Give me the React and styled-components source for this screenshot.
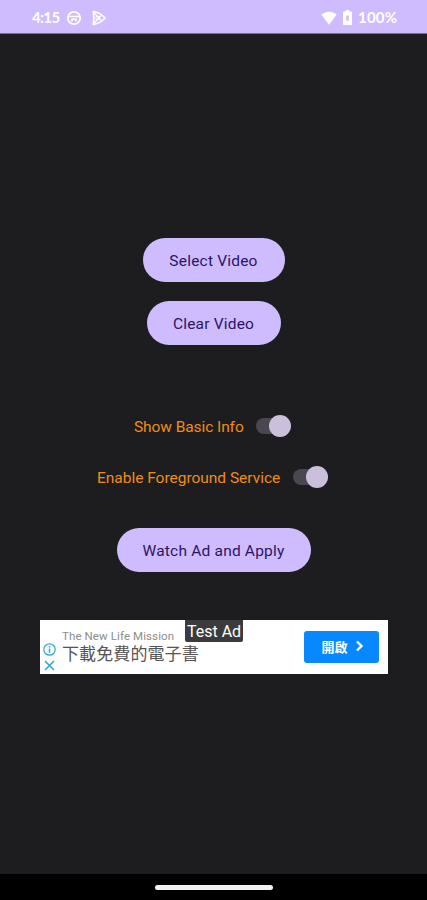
import styled, { createGlobalStyle } from "styled-components";

const GlobalStyle = createGlobalStyle`
  * {
    box-sizing: border-box;
  }
  body {
    margin: 0;
    background: #1d1d1f;
    font-family: Roboto, "Noto Sans CJK TC", sans-serif;
  }
`;

const Screen = styled.div`
  width: 427px;
  height: 900px;
  display: flex;
  flex-direction: column;
  background: #1d1d1f;
  overflow: hidden;
`;

const StatusBar = styled.header`
  height: 34px;
  flex-shrink: 0;
  padding: 2px 29px 0 32px;
  display: flex;
  align-items: center;
  justify-content: space-between;
  background: #cfbcff;
  border-bottom: 1px solid #77708f;
  color: #fff;
`;

const StatusGroup = styled.div`
  display: flex;
  align-items: center;
  gap: ${({ $gap }) => $gap}px;

  svg {
    display: block;
  }
`;

const StatusText = styled.span`
  width: ${({ $width }) => $width}px;
  font-family: Lato, sans-serif;
  font-size: 15px;
  line-height: 16px;
  padding-bottom: 1px;
  font-weight: 700;
  letter-spacing: ${({ $spacing }) => $spacing || 0}px;
  white-space: nowrap;
`;

const Content = styled.main`
  flex: 1;
  padding-top: 204px;
  display: flex;
  flex-direction: column;
  align-items: center;
`;

const PillButton = styled.button`
  width: ${({ $width }) => $width}px;
  height: 44px;
  margin-top: ${({ $top }) => $top || 0}px;
  padding: 1px 0 0;
  border: none;
  border-radius: 22px;
  background: #cfbcff;
  color: #2b1466;
  font-family: Roboto, sans-serif;
  font-size: 15.5px;
  font-weight: 450;
  letter-spacing: 0.2px;
  white-space: nowrap;
`;

const SwitchRow = styled.label`
  height: 24px;
  margin-top: ${({ $top }) => $top}px;
  margin-right: 2px;
  display: flex;
  align-items: center;
  gap: 12px;
`;

const SwitchLabel = styled.span`
  width: ${({ $width }) => $width}px;
  padding-top: 1px;
  color: #f28c13;
  font-size: 15.5px;
  line-height: 20px;
  letter-spacing: ${({ $spacing }) => $spacing}px;
  white-space: nowrap;
`;

const Track = styled.span`
  width: 28px;
  height: 16px;
  margin-right: 7px;
  display: flex;
  align-items: center;
  justify-content: flex-end;
  background: #4b4751;
  border-radius: 8px;
`;

const Thumb = styled.span`
  width: 22px;
  height: 22px;
  margin-right: -7px;
  flex-shrink: 0;
  border-radius: 50%;
  background: #cbc0dc;
`;

const AdBanner = styled.section`
  position: relative;
  width: 348px;
  height: 54px;
  margin: 48px 0 0 1px;
  display: flex;
  background: #fff;
`;

const AdChoices = styled.div`
  width: 20px;
  padding: 23px 0 0 3px;
  display: flex;
  flex-direction: column;
  gap: 3px;

  svg {
    display: block;
  }
`;

const AdCopy = styled.div`
  flex: 1;
  padding: 9px 0 0 2px;
`;

const Advertiser = styled.div`
  color: #8d8d8d;
  font-size: 11.5px;
  line-height: 14px;
  letter-spacing: 0.1px;
  white-space: nowrap;
`;

const AdTitle = styled.div`
  color: #555;
  font-family: "Noto Sans CJK TC", sans-serif;
  font-size: 17px;
  line-height: 20px;
  letter-spacing: 0.1px;
  white-space: nowrap;
`;

const OpenButton = styled.button`
  width: 75px;
  height: 32px;
  margin: 11px 9px 0 0;
  padding: 0 0 2px 2px;
  display: flex;
  align-items: center;
  justify-content: center;
  gap: 7px;
  border: none;
  border-radius: 3px;
  background: #0788ff;
  color: #fff;
  font-family: "Noto Sans CJK TC", sans-serif;
  font-size: 13px;
  font-weight: 700;
`;

const TestBadge = styled.div`
  position: absolute;
  top: 0;
  left: 145px;
  width: 58px;
  height: 22px;
  border-radius: 0 0 2px 2px;
  background: #3b3b3d;
  color: #fff;
  font-size: 16px;
  line-height: 23px;
  text-align: center;
  white-space: nowrap;
`;

const NavBar = styled.footer`
  height: 26px;
  flex-shrink: 0;
  padding-top: 11px;
  background: #000;
`;

const NavHandle = styled.div`
  width: 118px;
  height: 5px;
  margin: 0 auto;
  border-radius: 3px;
  background: #f2f2f2;
`;

function WheelIcon() {
  return (
    <svg width="16" height="16" viewBox="0 0 16 16" fill="none" stroke="#fff">
      <circle cx="8" cy="8" r="6.2" strokeWidth="1.8" />
      <path d="M3 6.5h10M5.5 9.2h5M6 9v2.500M10 9v2.500" strokeWidth="1.6" />
    </svg>
  );
}

function PlayIcon() {
  return (
    <svg width="16" height="16" viewBox="0 0 16 16" fill="none" stroke="#fff" strokeLinejoin="round">
      <path d="M2.3 1.5c4.6.5 8.6 3 11.7 6.5-3.1 3.5-7.1 6-11.7 6.5.8-4.2.8-8.8 0-13z" strokeWidth="1.6" />
      <path d="M2.8 2.5l7.9 8.5M2.8 13.5l7.9-8.5" strokeWidth="1.3" />
      <circle cx="6.5" cy="8" r="1.7" strokeWidth="1" />
    </svg>
  );
}

function WifiIcon() {
  return (
    <svg width="16" height="14" viewBox="0 0 16 14" fill="#fff">
      <path d="M.3 3.6C4.8-.3 11.2-.3 15.7 3.6L8 13.7z" />
    </svg>
  );
}

function BatteryIcon() {
  return (
    <svg width="9" height="15" viewBox="0 0 9 15">
      <path
        fill="#fff"
        fillRule="evenodd"
        d="M2.7 0h3.6v1.5H8c.6 0 1 .4 1 1V14c0 .6-.4 1-1 1H1c-.6 0-1-.4-1-1V2.500c0-.6.4-1 1-1h1.700zM3.200 5.500v5h2.600v-5z"
      />
    </svg>
  );
}

function InfoIcon() {
  return (
    <svg width="13" height="13" viewBox="0 0 13 13" fill="none" stroke="#32a4d2">
      <circle cx="6.5" cy="6.5" r="5.7" strokeWidth="1.2" />
      <path d="M6.5 5.5v4.3M6.5 3v1.5" strokeWidth="1.5" />
    </svg>
  );
}

function CloseIcon() {
  return (
    <svg width="13" height="13" viewBox="0 0 13 13" fill="none" stroke="#32a4d2">
      <path d="M2 2l9 9M11 2l-9 9" strokeWidth="1.5" />
    </svg>
  );
}

function ChevronIcon() {
  return (
    <svg width="9" height="12" viewBox="0 0 9 12" fill="none" stroke="#fff">
      <path d="M2 1.5L6.5 6 2 10.5" strokeWidth="2.4" />
    </svg>
  );
}

function Switch() {
  return (
    <Track>
      <Thumb />
    </Track>
  );
}

export default function App() {
  return (
    <>
      <GlobalStyle />
      <Screen>
        <StatusBar>
          <StatusGroup $gap={9}>
            <StatusText $width={25} $spacing={-0.6}>4:15</StatusText>
            <WheelIcon />
            <PlayIcon />
          </StatusGroup>
          <StatusGroup $gap={6}>
            <WifiIcon />
            <BatteryIcon />
            <StatusText $width={40} $spacing={0.2}>100%</StatusText>
          </StatusGroup>
        </StatusBar>
        <Content>
          <PillButton $width={142}>Select Video</PillButton>
          <PillButton $width={134} $top={19}>Clear Video</PillButton>
          <SwitchRow $top={69}>
            <SwitchLabel $width={110} $spacing={-0.08}>Show Basic Info</SwitchLabel>
            <Switch />
          </SwitchRow>
          <SwitchRow $top={27}>
            <SwitchLabel $width={184} $spacing={-0.02}>Enable Foreground Service</SwitchLabel>
            <Switch />
          </SwitchRow>
          <PillButton $width={194} $top={39}>Watch Ad and Apply</PillButton>
          <AdBanner>
            <AdChoices>
              <InfoIcon />
              <CloseIcon />
            </AdChoices>
            <AdCopy>
              <Advertiser>The New Life Mission</Advertiser>
              <AdTitle>下載免費的電子書</AdTitle>
            </AdCopy>
            <OpenButton>
              開啟
              <ChevronIcon />
            </OpenButton>
            <TestBadge>Test Ad</TestBadge>
          </AdBanner>
        </Content>
        <NavBar>
          <NavHandle />
        </NavBar>
      </Screen>
    </>
  );
}
